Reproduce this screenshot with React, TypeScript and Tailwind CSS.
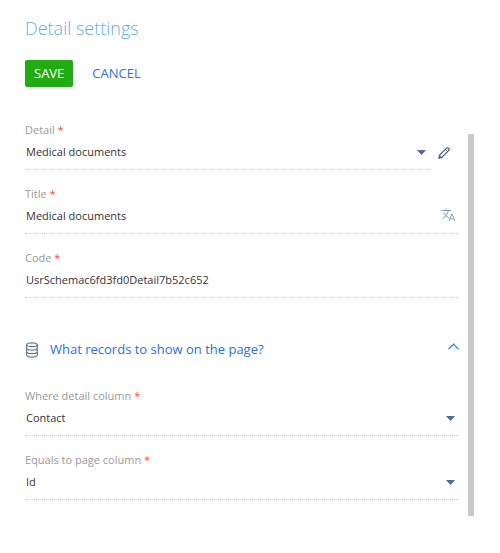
import { useId, useState } from 'react';
import type { ReactNode } from 'react';

function Label({ id, children }: { id: string; children: ReactNode }) {
  return (
    <label htmlFor={id} className="block text-[11px] leading-4 text-[#999999]">
      {children} <span className="text-[#f0523d]">*</span>
    </label>
  );
}

function Caret() {
  return (
    <svg className="pointer-events-none absolute top-3 right-1 h-[5px] w-[9px]" viewBox="0 0 9 5" aria-hidden="true">
      <path d="M0 0H9L4.5 5Z" fill="#4a69a5" />
    </svg>
  );
}

function SelectField({ label, value }: { label: string; value: string }) {
  const id = useId();
  return (
    <div className="min-w-0 flex-1">
      <Label id={id}>{label}</Label>
      <div className="relative border-b border-dotted border-[#cccccc] pb-[3px]">
        <select
          id={id}
          defaultValue={value}
          className="block h-7 w-full appearance-none bg-transparent pr-5 pl-px text-[11px] text-[#333333] outline-none"
        >
          <option>{value}</option>
        </select>
        <Caret />
      </div>
    </div>
  );
}

function TextField({ label, value, action }: { label: string; value: string; action?: ReactNode }) {
  const id = useId();
  return (
    <div>
      <Label id={id}>{label}</Label>
      <div className="flex items-center border-b border-dotted border-[#cccccc] pb-[5px]">
        <input
          id={id}
          type="text"
          defaultValue={value}
          className="block h-[26px] min-w-0 flex-1 bg-transparent pl-px text-[11px] text-[#333333] outline-none"
        />
        {action}
      </div>
    </div>
  );
}

function PencilIcon() {
  return (
    <svg className="h-3 w-3" viewBox="0 0 12 12" fill="none" stroke="#43557a" strokeWidth="1.2" strokeLinejoin="round" aria-hidden="true">
      <path d="M.8 11.2 1.6 8.2 8.6 1.2Q9.4.4 10.2 1.1L10.9 1.8Q11.6 2.6 10.8 3.4L3.8 10.4Z" />
      <path d="M7.4 2.4 9.6 4.6M1.6 8.2 3.8 10.4" strokeWidth=".9" />
    </svg>
  );
}

function TranslateIcon() {
  return (
    <svg className="h-[14px] w-[15px]" viewBox="0 0 15 14" fill="none" stroke="#7f9cc3" aria-hidden="true">
      <path d="M.5 2.5H10M5 .5V2.5M2.6 4.3Q4.2 8.2 8 10M7.4 2.8Q6.8 7.6 1.6 10.5" />
      <path d="M8 13.2 11 5.8 14 13.2M9 10.9H13" />
    </svg>
  );
}

function DatabaseIcon() {
  return (
    <svg className="h-4 w-[14px]" viewBox="0 0 14 16" fill="none" stroke="#66768f" strokeWidth="1.2" aria-hidden="true">
      <ellipse cx="7" cy="2.7" rx="5.3" ry="1.9" />
      <path d="M1.7 2.7V13.2Q2.6 15.1 7 15.1T12.3 13.2V2.7M1.7 6.2Q2.6 8.1 7 8.1T12.3 6.2M1.7 9.7Q2.6 11.6 7 11.6T12.3 9.7" />
    </svg>
  );
}

export default function App() {
  const [open, setOpen] = useState(true);
  return (
    <main className="min-h-screen bg-white pt-3 pr-[26px] pb-9 pl-[25px] font-['Open_Sans','Noto_Sans',sans-serif]">
      <h1 className="text-[18px] leading-8 font-light text-[#5fb0db]">Detail settings</h1>
      <div className="mt-4 flex gap-[9px]">
        <button type="button" className="h-[27px] rounded-[2px] bg-[#22ac14] px-[9px] text-[13px] text-white">
          SAVE
        </button>
        <button type="button" className="h-[27px] px-[10px] text-[13px] text-[#2a70e0]">
          CANCEL
        </button>
      </div>

      <div className="mt-[35px] flex gap-[9px]">
        <form className="min-w-0 flex-1 pb-4" onSubmit={(e) => e.preventDefault()}>
          <div className="flex flex-col gap-4">
            <div className="flex">
              <SelectField label="Detail" value="Medical documents" />
              <button type="button" aria-label="Edit detail" className="mt-4 flex h-[29px] w-[29px] items-center justify-center pr-px">
                <PencilIcon />
              </button>
            </div>
            <TextField
              label="Title"
              value="Medical documents"
              action={
                <button type="button" aria-label="Translate title" className="pr-[3px]">
                  <TranslateIcon />
                </button>
              }
            />
            <TextField label="Code" value="UsrSchemac6fd3fd0Detail7b52c652" />
          </div>

          <h2 className="mt-10">
            <button
              type="button"
              aria-expanded={open}
              onClick={() => setOpen(!open)}
              className="flex h-6 w-full items-center text-left text-[13px] text-[#2a70e0]"
            >
              <DatabaseIcon />
              <span className="ml-[11px] flex-1">What records to show on the page?</span>
              <svg className="mb-2 h-[7px] w-[11px]" viewBox="0 0 11 7" fill="none" stroke="#3a8bea" strokeWidth="1.3" aria-hidden="true">
                <path d="M.5 6.2 5.5 1.2 10.5 6.2" />
              </svg>
            </button>
          </h2>

          {open && (
            <div className="mt-[26px] flex flex-col gap-4">
              <SelectField label="Where detail column" value="Contact" />
              <SelectField label="Equals to page column" value="Id" />
            </div>
          )}
        </form>
        <div className="mt-3 w-[6px] shrink-0 bg-[#c9c9c9]" />
      </div>
    </main>
  );
}
